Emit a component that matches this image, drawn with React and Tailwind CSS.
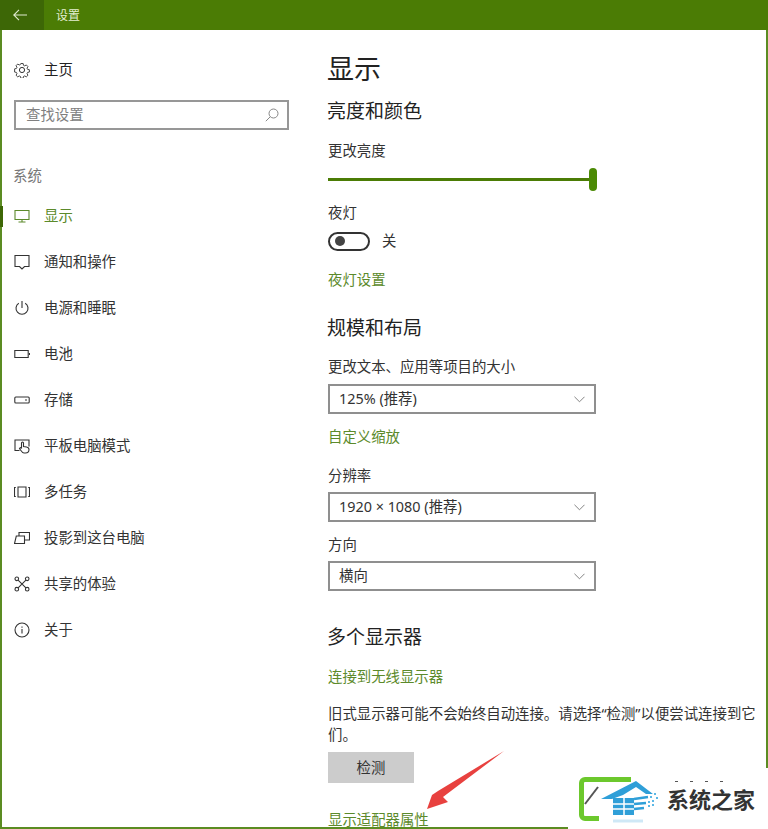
import React from "react";

const ICON = "w-4 h-4 shrink-0 fill-none stroke-current";

const GearIcon = () => (
  <svg viewBox="0 0 16 16" className={ICON} strokeWidth="1">
    <circle cx="8" cy="8" r="2.6" />
    <path d="M6.7 .8h2.6l.4 2 1.3.6 1.8-1 1.8 1.8-1 1.8.6 1.3 2 .4v2.6l-2 .4-.6 1.3 1 1.8-1.8 1.8-1.8-1-1.3.6-.4 2H6.7l-.4-2-1.3-.6-1.8 1-1.8-1.8 1-1.8-.6-1.3-2-.4V6.7l2-.4.6-1.3-1-1.8 1.8-1.8 1.8 1 1.3-.6z" transform="translate(.8 .8) scale(.9)" />
  </svg>
);
const MonitorIcon = () => (
  <svg viewBox="0 0 16 16" className={ICON} strokeWidth="1.1">
    <path d="M1 2.500h14v9H1zM8 11.500v2.500M4.500 14h7" />
  </svg>
);
const MessageIcon = () => (
  <svg viewBox="0 0 16 16" className={ICON} strokeWidth="1.1">
    <path d="M1 1.500h14v11h-4.500L8 15l-2.500-2.500H1z" />
  </svg>
);
const PowerIcon = () => (
  <svg viewBox="0 0 16 16" className={ICON} strokeWidth="1.1">
    <path d="M8 1v7M4.800 3.200a6 6 0 1 0 6.400 0" />
  </svg>
);
const BatteryIcon = () => (
  <svg viewBox="0 0 16 16" className={ICON} strokeWidth="1.1">
    <path d="M.8 4.500h13.400v7H.8zM15.500 7v2" />
  </svg>
);
const StorageIcon = () => (
  <svg viewBox="0 0 16 16" className={ICON} strokeWidth="1.1">
    <rect x=".8" y="5" width="14.400" height="6" rx="1" />
    <path d="M11 8h2" />
  </svg>
);
const TabletIcon = () => (
  <svg viewBox="0 0 16 16" className={ICON} strokeWidth="1.1">
    <path d="M5.500 12.500H1V2h14v6.500" />
    <path d="M7.500 10V5a1 1 0 0 1 2 0v3.500l3 .5c1.500.3 2.500 1 2.500 2.500 0 2.500-1.500 3.500-3.500 3.500H10c-1.500 0-2.500-1.500-3.500-3l-1-1.500.8-.8z" />
  </svg>
);
const MultitaskIcon = () => (
  <svg viewBox="0 0 16 16" className={ICON} strokeWidth="1.1">
    <path d="M4 3h8v10H4zM1.800 3.500H.5v9h1.300M14.200 3.500h1.300v9h-1.300" />
  </svg>
);
const ProjectIcon = () => (
  <svg viewBox="0 0 16 16" className={ICON} strokeWidth="1.1">
    <path d="M5 6V2.500h10.500v7.500H11M.5 13.500l1.800-7.500h8.200v7.500zM.5 13.500h10" />
  </svg>
);
const ShareIcon = () => (
  <svg viewBox="0 0 16 16" className={ICON} strokeWidth="1.1">
    <circle cx="2.800" cy="2.800" r="1.800" />
    <circle cx="13.200" cy="2.800" r="1.800" />
    <circle cx="2.800" cy="13.200" r="1.800" />
    <circle cx="13.200" cy="13.200" r="1.800" />
    <path d="M4.100 4.100l7.800 7.800M11.900 4.100l-7.800 7.800" />
  </svg>
);
const InfoIcon = () => (
  <svg viewBox="0 0 16 16" className={ICON} strokeWidth="1.1">
    <circle cx="8" cy="8" r="7" />
    <path d="M8 7v4.500M8 4.500v1.200" />
  </svg>
);

const navItems = [
  { name: "显示", icon: MonitorIcon, active: true },
  { name: "通知和操作", icon: MessageIcon },
  { name: "电源和睡眠", icon: PowerIcon },
  { name: "电池", icon: BatteryIcon },
  { name: "存储", icon: StorageIcon },
  { name: "平板电脑模式", icon: TabletIcon },
  { name: "多任务", icon: MultitaskIcon },
  { name: "投影到这台电脑", icon: ProjectIcon },
  { name: "共享的体验", icon: ShareIcon },
  { name: "关于", icon: InfoIcon },
];

const Select = ({ value, className }) => (
  <div className={`flex h-[30px] w-[268px] items-center justify-between border-2 border-[#8f8f8f] pl-[9px] pr-[9px] text-[14.4px] text-[#333] ${className}`}>
    <span>{value}</span>
    <svg viewBox="0 0 12 7" className="h-[7px] w-[11px] fill-none stroke-[#777]">
      <path d="M.5 .5L6 6l5.500-5.500" />
    </svg>
  </div>
);

const Label = ({ children, className }) => (
  <p className={`h-5 text-[14.4px] leading-5 text-[#333] ${className}`}>{children}</p>
);

const GreenLink = ({ children, className }) => (
  <p className={`h-5 text-[14.4px] leading-5 text-[#5c8a2b] ${className}`}>{children}</p>
);

const Heading = ({ children, className }) => (
  <h2 className={`-ml-px h-7 text-[19px] leading-7 text-[#222] ${className}`}>{children}</h2>
);

const App = () => {
  return (
    <div
      className="relative flex h-[829px] w-[768px] flex-col overflow-hidden bg-white"
      style={{ fontFamily: '"Noto Sans", "Noto Sans CJK SC", sans-serif' }}
    >
      {/* title bar */}
      <div className="flex h-[30px] shrink-0 items-center bg-[#4b7c05]">
        <div className="flex h-full w-[44px] items-center justify-center bg-[#3d6706] pr-1">
          <svg viewBox="0 0 14 12" className="h-3 w-[14px] fill-none stroke-[#dfe9cf]" strokeWidth="1.1">
            <path d="M14 6H1M6 .8L.8 6 6 11.200" />
          </svg>
        </div>
        <span className="ml-[12px] pt-px text-[12px] text-[#e4eed2]">设置</span>
      </div>

      <div className="flex min-h-0 flex-1 border-x-2 border-b-2 border-x-[#5b8c22] border-b-[#5b8c22]">
        {/* sidebar */}
        <aside className="w-[326px] shrink-0">
          <div className="mt-[30px] flex h-5 items-center pl-3 text-[#333]">
            <GearIcon />
            <span className="ml-[14px] text-[14.4px] text-[#222]">主页</span>
          </div>
          <div className="ml-3 mt-[20px] flex h-[30px] w-[275px] items-center justify-between border-2 border-[#979797] pl-[10px] pr-2 text-[14.4px] text-[#808080]">
            <span>查找设置</span>
            <svg viewBox="0 0 14 14" className="h-[14px] w-[14px] fill-none stroke-[#888]">
              <circle cx="8.500" cy="5.500" r="4.500" />
              <path d="M5.300 8.700L.8 13.200" />
            </svg>
          </div>
          <p className="ml-[11px] mt-[36px] h-5 text-[14.4px] leading-5 text-[#777]">系统</p>
          <nav className="mt-[20px] flex flex-col gap-[26px]">
            {navItems.map((item) => (
              <div
                key={item.name}
                className={`relative flex h-5 items-center pl-3 ${item.active ? "text-[#5c8a2b]" : "text-[#333]"}`}
              >
                {item.active && <span className="absolute -left-[2px] top-0 h-[21px] w-[3px] bg-[#3d6706]" />}
                <item.icon />
                <span className="ml-[14px] text-[14.4px]">{item.name}</span>
              </div>
            ))}
          </nav>
        </aside>

        {/* main */}
        <main className="min-w-0 flex-1">
          <h1 className="-ml-px mt-[19px] h-10 text-[27px] leading-10 text-[#222]">显示</h1>
          <Heading className="mt-2">亮度和颜色</Heading>
          <Label className="mt-4">更改亮度</Label>

          <div className="mt-[6px] flex h-6 w-[269px] items-center">
            <div className="h-[3px] flex-1 bg-[#4b7c05]" />
            <div className="h-[23px] w-2 rounded-full bg-[#4b8a05]" />
          </div>

          <Label className="mt-3">夜灯</Label>
          <div className="mt-2 flex h-5 items-center">
            <div className="flex h-[19px] w-[42px] items-center rounded-full border-2 border-[#333] pl-[5px]">
              <span className="h-[10px] w-[10px] rounded-full bg-[#444]" />
            </div>
            <span className="ml-3 text-[14.4px] text-[#333]">关</span>
          </div>
          <GreenLink className="mt-[19px]">夜灯设置</GreenLink>

          <Heading className="mt-6">规模和布局</Heading>
          <Label className="mt-[15px]">更改文本、应用等项目的大小</Label>
          <Select value="125% (推荐)" className="mt-[7px]" />
          <GreenLink className="mt-[13px]">自定义缩放</GreenLink>

          <Label className="mt-[19px]">分辨率</Label>
          <Select value="1920 × 1080 (推荐)" className="mt-[6px]" />
          <Label className="mt-[13px]">方向</Label>
          <Select value="横向" className="mt-[6px]" />

          <Heading className="mt-8">多个显示器</Heading>
          <GreenLink className="mt-4">连接到无线显示器</GreenLink>

          <p className="mt-4 text-[14.4px] leading-[21px] text-[#333]">
            旧式显示器可能不会始终自动连接。请选择“检测”以便尝试连接到它
            <br />
            们。
          </p>
          <button className="mt-[7px] flex h-[31px] w-[86px] items-center justify-center bg-[#cccccc] text-[14.4px] text-[#333]">
            检测
          </button>
          <GreenLink className="mt-[27px]">显示适配器属性</GreenLink>
        </main>
      </div>

      {/* red arrow pointing at the link */}
      <svg viewBox="0 0 768 829" className="pointer-events-none absolute inset-0 h-[829px] w-[768px]">
        <polygon points="504,751 443,797 448,802 427,809 432,795 438,791" fill="#e8413f" />
      </svg>

      {/* site watermark */}
      <div className="absolute left-[568px] top-[768px] flex h-[61px] w-[200px] items-center bg-white">
        <svg viewBox="0 0 91 61" className="ml-[8px] h-[61px] w-[91px] shrink-0">
          <path d="M55 11.500H9a3.500 3.500 0 0 0-3.500 3.500v32a3.500 3.500 0 0 0 3.500 3.500h14" fill="none" stroke="#6cc82d" strokeWidth="5" />
          <path d="M22 19L9 36" stroke="#555" strokeWidth="2" />
          <polygon points="25,31 60,13 77,26 70,26 60,19 47,27 36,31" fill="#2f9fd8" />
          <path d="M37 30h21v17H37z" fill="#2f9fd8" />
          <path d="M48 30v17M37 36h21M37 41h21" stroke="#fff" strokeWidth="1.500" />
          <path d="M58 31l14-2M58 36l12-1M58 41l10-1" stroke="#2f9fd8" strokeWidth="2.500" />
          <path d="M74 29h2M78 26h2M72 34h2M76 33h2M80 30h2M72 38h2M76 37h2" stroke="#5cb8e6" strokeWidth="2" />
          <path d="M37 53h30" stroke="#cfe8f6" strokeWidth="3" />
        </svg>
        <span className="text-[22px] font-bold leading-none text-[#333]">系统之家</span>
        <span className="absolute left-[107px] top-[13px] flex gap-[12px]">
          <i className="h-px w-[3px] bg-[#555]" />
          <i className="h-px w-[3px] bg-[#555]" />
          <i className="h-px w-[3px] bg-[#555]" />
          <i className="h-px w-[3px] bg-[#555]" />
        </span>
      </div>
    </div>
  );
};

export default App;
